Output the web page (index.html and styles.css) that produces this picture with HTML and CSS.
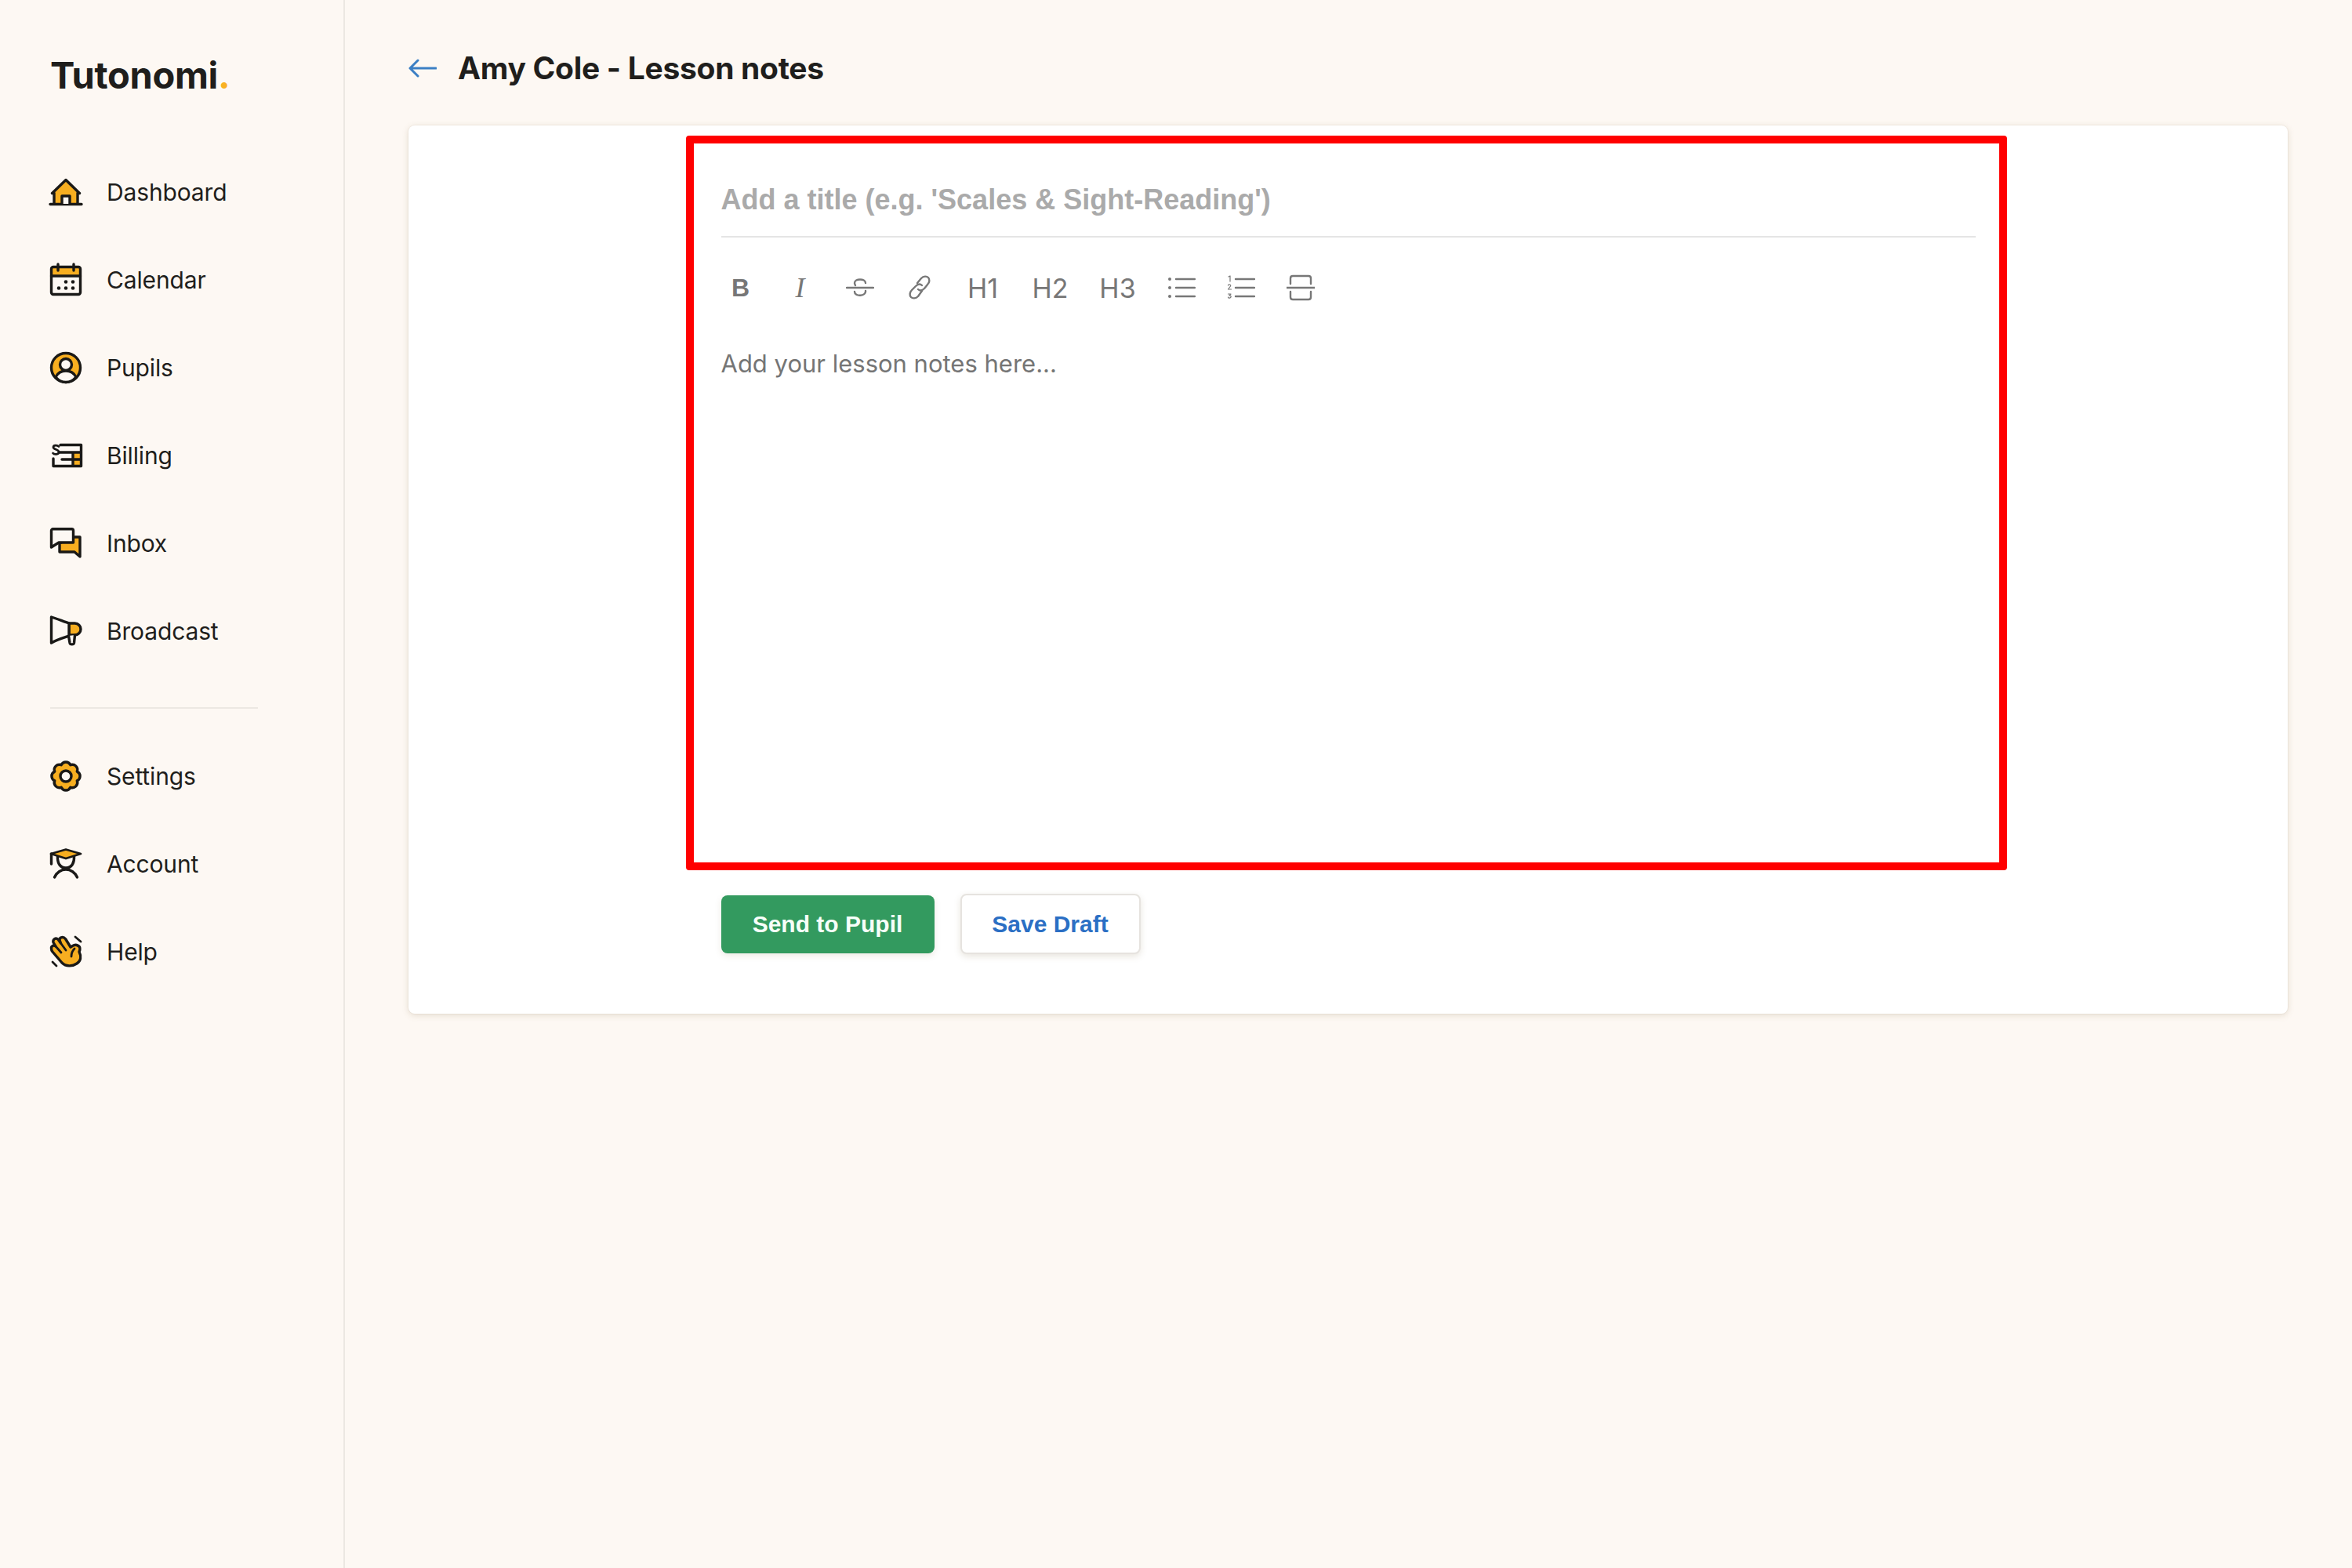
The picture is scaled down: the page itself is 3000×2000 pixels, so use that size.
FILE: index.html
```html
<!DOCTYPE html>
<html lang="en">
<head>
<meta charset="utf-8">
<title>Tutonomi - Lesson notes</title>
<link rel="stylesheet" href="styles.css">
</head>
<body>
<div class="app">
  <aside class="sidebar">
    <div class="logo">Tutonomi<span class="logo-dot">.</span></div>
    <nav class="nav">
      <a class="nav-item"><svg class="nav-icon" viewBox="0 0 40 40"><path class="y" d="M4 22 20 5l16 17v13H4z"/><path class="o" d="M2.5 21.5 20 4.5l17.5 17M5 21v14M35 21v14M0 35.5h40"/><path class="w o" d="M15 35V25h10v10"/></svg><span>Dashboard</span></a>
      <a class="nav-item"><svg class="nav-icon" viewBox="0 0 40 40"><rect class="w" x="1.5" y="3.5" width="37" height="35" rx="2.5"/><path class="y" d="M2 4h36v11H2z"/><rect class="o" x="1.5" y="3.5" width="37" height="35" rx="2.5"/><path class="o" d="M1.5 15h37M10 0v8M30 0v8"/><circle class="k" cx="20" cy="22.500" r="2.300"/><circle class="k" cx="29" cy="22.500" r="2.300"/><circle class="k" cx="11" cy="30.500" r="2.300"/><circle class="k" cx="20" cy="30.500" r="2.300"/><circle class="k" cx="29" cy="30.500" r="2.300"/></svg><span>Calendar</span></a>
      <a class="nav-item"><svg class="nav-icon" viewBox="0 0 40 40"><circle class="y o" cx="20" cy="20" r="18.500"/><path class="w o" d="M7 32c3-6 8-8 13-8s10 2 13 8c-3.500 4-8 6.500-13 6.500S10.500 36 7 32z"/><circle class="w o" cx="20" cy="16" r="7.500"/></svg><span>Pupils</span></a>
      <a class="nav-item"><svg class="nav-icon" viewBox="0 0 40 40"><path class="y" d="M29 16h11v18H29z"/><path class="o" d="M13 6.500h26.500v27H4V24M12 16h27.500M15 25h24.500M29 16v17"/><path class="o thin" d="M11 8.500C9 6.500 4 6.500 4 9.500s7 2.500 7 6-6 3.500-7.500 1.500"/></svg><span>Billing</span></a>
      <a class="nav-item"><svg class="nav-icon" viewBox="0 0 40 40"><path class="y o" d="M28 12h10v25l-7-6H12V20z"/><path class="w o" d="M3.500 1.800h24a2 2 0 0 1 2 2V19H11l-9.500 6V3.800a2 2 0 0 1 2-2z"/></svg><span>Inbox</span></a>
      <a class="nav-item"><svg class="nav-icon" viewBox="0 0 40 40"><path class="y o" d="M24 10h7.500a7.500 7.500 0 0 1 0 15H24z"/><path class="w o" d="M1.500 2C8 4 18 8 24 10v16C18 28 8 31 1.500 35z"/><path class="w o" d="M23.500 26l1.500 9c.500 2.500 5 2.500 5.500 0l1-10"/></svg><span>Broadcast</span></a>
    </nav>
    <div class="nav-divider"></div>
    <nav class="nav nav-lower">
      <a class="nav-item"><svg class="nav-icon" viewBox="0 0 40 40"><path class="y o" d="M34.300 14.100A6.500 6.500 0 0 0 25.900 5.700 6.500 6.500 0 0 0 14.100 5.700 6.500 6.500 0 0 0 5.700 14.100 6.500 6.500 0 0 0 5.700 25.900 6.500 6.500 0 0 0 14.100 34.300 6.500 6.500 0 0 0 25.900 34.300 6.500 6.500 0 0 0 34.300 25.900 6.500 6.500 0 0 0 34.300 14.100z"/><circle class="w o" cx="20" cy="20" r="7"/></svg><span>Settings</span></a>
      <a class="nav-item"><svg class="nav-icon" viewBox="0 0 40 40"><path class="o" d="M9.500 10C9 18 12 25 20 25s11-7 10.500-15M5.500 37C8 31 14 27 20 27s12 4 14.500 10"/><path class="y o thin" d="M20 1.500 39 7l-19 6L1 7z"/><path class="o" d="M1.500 7v13"/></svg><span>Account</span></a>
      <a class="nav-item"><svg class="nav-icon" viewBox="0 0 40 40"><path class="y o" d="M1.500 16C1 12.500 4.500 11 7 13L4 8C3 4 7 1.500 10 4l3.500 5L12 5C12 1 17 .500 19.500 3.500L26 14c3-2 6-4 9-2 3.500 1 3.500 5 2 8 3 6 2 12-3 15-6 4-14 4-19-1L3 20c-1.500-2-1.500-3-1.500-4z"/><path class="o thin" d="M7 13l7 8M13.500 9l6.500 9M31 16c-3 3-4 6-4 10M3 33l5 5M32 1l7 6"/></svg><span>Help</span></a>
    </nav>
  </aside>
  <main class="main">
    <header class="page-head">
      <svg class="back" viewBox="0 0 36 24"><path d="M35 12H2M12 2 2 12l10 10"/></svg>
      <h1 class="page-title">Amy Cole - Lesson notes</h1>
    </header>
    <section class="card">
      <div class="column">
        <div class="editor">
          <div class="title-field">Add a title (e.g. 'Scales &amp; Sight-Reading')</div>
          <div class="toolbar">
            <span class="tool tool-b">B</span>
            <span class="tool tool-i">I</span>
            <span class="tool"><svg class="tool-icon" viewBox="0 0 36 32"><path d="M25 10c0-6-14-6-14 0 0 1 .500 2 1 3M1 16h34M25 20c1 7-14 8-14 1"/></svg></span>
            <span class="tool"><svg class="tool-icon" viewBox="0 0 36 36"><path d="M15 12l5-6c3-3 7-3 9-1s2 6-1 9l-4 5c-3 3-6 3-8 1M21 22l-5 7c-3 3-7 3-9 1s-2-6 1-9l5-5c3-3 6-3 8-1"/></svg></span>
            <span class="tool tool-h">H1</span>
            <span class="tool tool-h">H2</span>
            <span class="tool tool-h">H3</span>
            <span class="tool"><svg class="tool-icon" viewBox="0 0 36 32"><path d="M11 5h24M11 16h24M11 27h24"/><circle class="dot" cx="3" cy="5" r="2"/><circle class="dot" cx="3" cy="16" r="2"/><circle class="dot" cx="3" cy="27" r="2"/></svg></span>
            <span class="tool"><svg class="tool-icon" viewBox="0 0 36 32"><path d="M11 5h24M11 16h24M11 27h24"/><path class="fine" d="M2 2l2-1v7M1.500 13c1-2 4-1 3 1l-3 4h4M1.500 24h3.500l-2 2c2 0 2.500 1 2 2s-3 2-3.500 0"/></svg></span>
            <span class="tool"><svg class="tool-icon" viewBox="0 0 36 36"><path d="M0 18h36M5 13V6c0-2 1-3 3-3h20c2 0 3 1 3 3v7M5 23v7c0 2 1 3 3 3h20c2 0 3-1 3-3v-7"/></svg></span>
          </div>
          <div class="notes">Add your lesson notes here...</div>
        </div>
        <div class="actions">
          <button class="btn btn-primary">Send to Pupil</button>
          <button class="btn btn-secondary">Save Draft</button>
        </div>
      </div>
    </section>
  </main>
</div>
</body>
</html>
```
FILE: styles.css
```css
* { box-sizing: border-box; }
html, body { margin: 0; padding: 0; }
body {
  background: #fdf8f3;
  color: #1f1e1c;
  font-family: Inter, "Liberation Sans", sans-serif;
}
.app { display: flex; min-height: 2000px; }

.sidebar {
  width: 440px;
  flex: none;
  border-right: 2px solid #ece8e2;
  padding: 66px 0 0 64px;
}
.logo {
  height: 123px;
  font-size: 47px;
  line-height: 60px;
  font-weight: 700;
  letter-spacing: -0.3px;
}
.logo-dot { color: #f9b122; }
.nav { display: flex; flex-direction: column; }
.nav-item {
  height: 112px;
  display: flex;
  align-items: center;
  gap: 32px;
  font-size: 30px;
  letter-spacing: -0.15px;
}
.nav-icon { width: 40px; height: 40px; flex: none; overflow: visible; }
.nav-icon .y { fill: #f7ae20; }
.nav-icon .w { fill: #fdf8f3; }
.nav-icon .k { fill: #1a1917; }
.nav-icon .o { stroke: #1a1917; stroke-width: 3.4; stroke-linejoin: round; stroke-linecap: round; }
.nav-icon path.o:not(.y):not(.w), .nav-icon rect.o:not(.w) { fill: none; }
.nav-icon .thin { stroke-width: 2.8; }
.nav-divider { width: 265px; height: 2px; background: #ece8e2; margin: 41px 0 30px; }

.main { flex: 1; padding: 0 82px 0 81px; min-width: 0; }
.page-head {
  height: 160px;
  padding-top: 14px;
  display: flex;
  align-items: center;
  gap: 27px;
}
.back { width: 36px; height: 24px; flex: none; fill: none; stroke: #3b7fc4; stroke-width: 3; stroke-linecap: round; stroke-linejoin: round; }
.page-title { margin: 0; font-size: 39px; line-height: 48px; font-weight: 700; letter-spacing: -0.3px; }

.card {
  background: #fff;
  border-radius: 8px;
  padding: 13px 0 76px;
  box-shadow: 0 2px 8px rgba(130, 110, 70, 0.2), 0 0 0 1px rgba(130, 110, 70, 0.06);
}
.column { width: 1600px; margin: 0 auto; }
.editor {
  height: 937px;
  margin: 0 -40px 0 -45px;
  border: 10px solid #ff0000;
  border-radius: 4px;
  padding: 0 30px 0 35px;
}
.title-field {
  padding: 51px 0 25px;
  height: 120px;
  border-bottom: 2px solid #e5e5e5;
  font-family: "Liberation Sans", Arial, sans-serif;
  font-size: 36px;
  line-height: 42px;
  font-weight: 700;
  color: #aaaaaa;
}
.toolbar { display: flex; gap: 26px; margin-top: 39px; height: 50px; color: #777; }
.tool { width: 50px; height: 50px; display: flex; align-items: center; justify-content: center; flex: none; }
.tool-b { font-family: "Liberation Sans", sans-serif; font-weight: 700; font-size: 32px; }
.tool-i { font-family: "Liberation Serif", serif; font-style: italic; font-size: 36px; }
.tool-h { width: 60px; font-size: 34px; font-weight: 400; }
.tool-icon { width: 36px; height: 36px; fill: none; stroke: #777; stroke-width: 2.4; stroke-linecap: round; stroke-linejoin: round; }
.tool-icon .dot { fill: #777; stroke: none; }
.tool-icon .fine { stroke-width: 1.2; }
.notes { margin-top: 52px; font-size: 31px; line-height: 40px; color: #757575; }

.actions { display: flex; align-items: center; gap: 33px; margin-top: 30px; }
.btn {
  font-family: "Liberation Sans", Arial, sans-serif;
  font-size: 30px;
  font-weight: 700;
  border-radius: 8px;
  cursor: pointer;
}
.btn-primary {
  width: 272px; height: 74px;
  background: #339a5f;
  color: #f6fff9;
  border: 0;
  box-shadow: 0 3px 8px rgba(130, 110, 70, 0.15);
}
.btn-secondary {
  width: 230px; height: 77px;
  background: #fff;
  color: #2b6fc4;
  border: 2px solid #e6e3df;
  box-shadow: 0 3px 8px rgba(130, 110, 70, 0.18);
}
```
